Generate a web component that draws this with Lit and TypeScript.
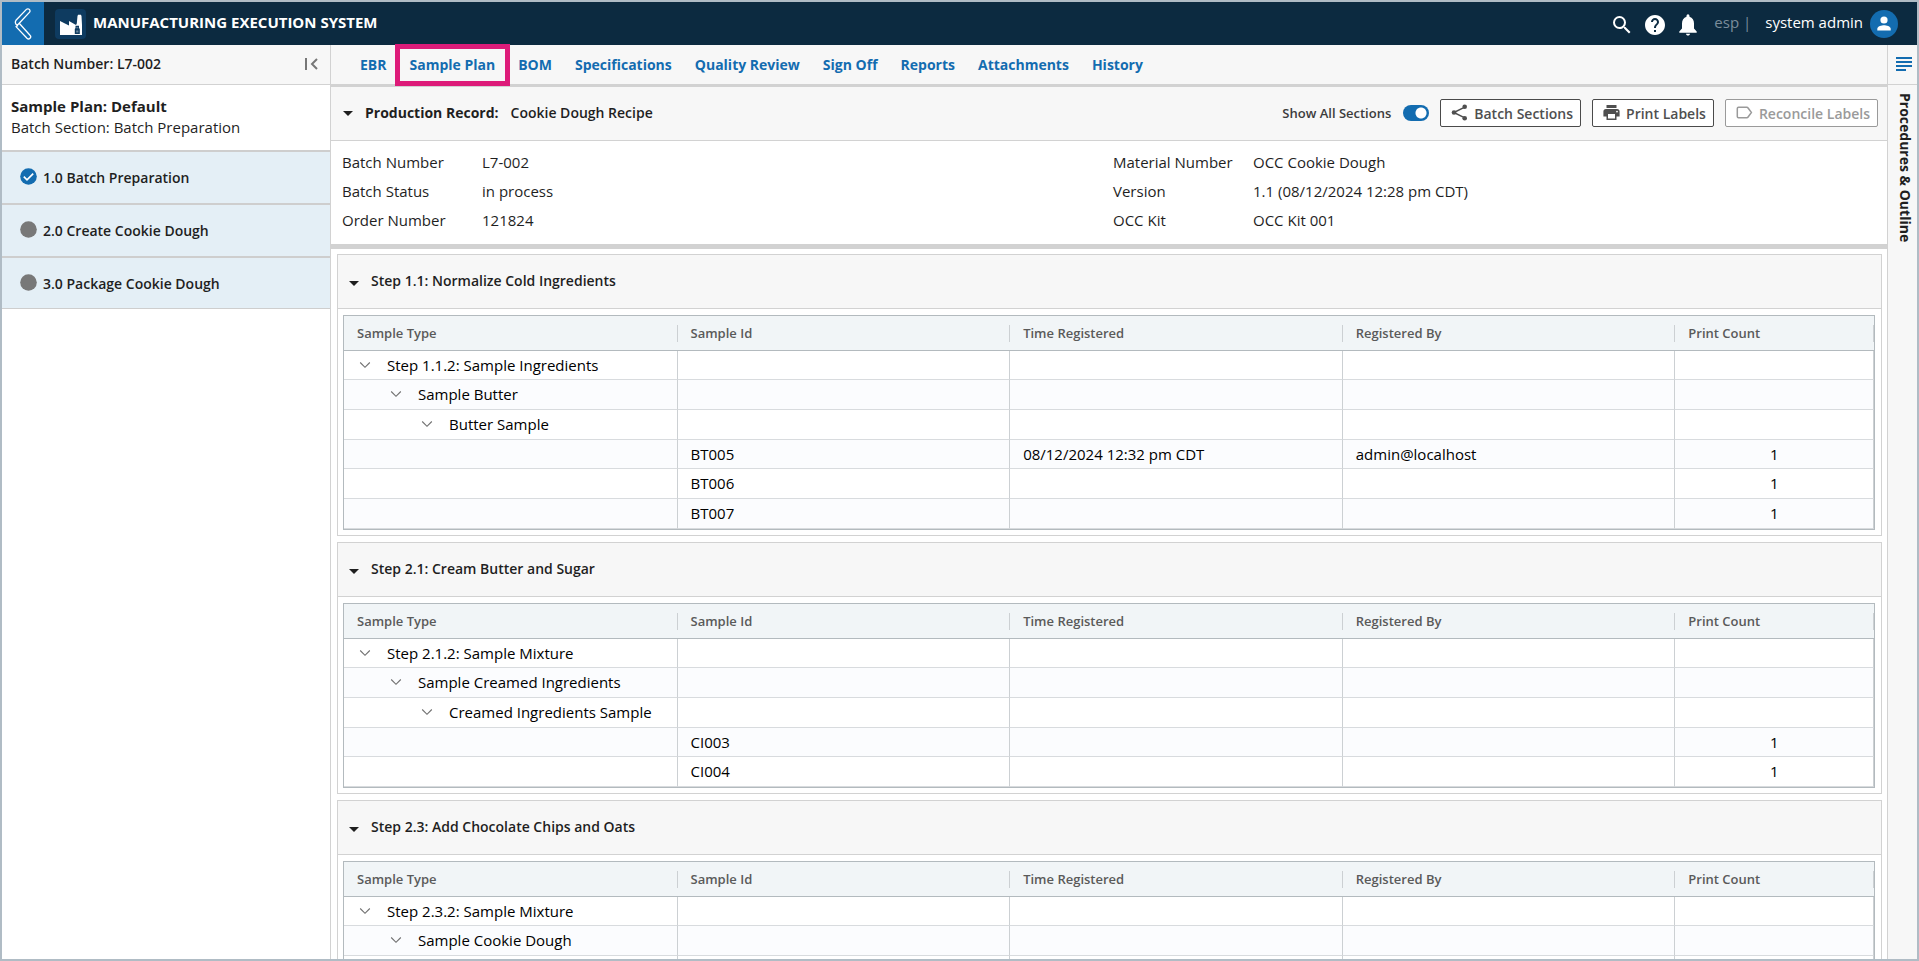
import { LitElement, html, css, svg, nothing } from "lit";
import { customElement, property, state } from "lit/decorators.js";
import { classMap } from "lit/directives/class-map.js";

interface SampleRow {
  level?: number;
  label?: string;
  id?: string;
  time?: string;
  by?: string;
  count?: number;
}

interface Step {
  title: string;
  rows: SampleRow[];
}

const TABS = [
  "EBR",
  "Sample Plan",
  "BOM",
  "Specifications",
  "Quality Review",
  "Sign Off",
  "Reports",
  "Attachments",
  "History",
];

const SECTIONS = [
  { name: "1.0 Batch Preparation", done: true },
  { name: "2.0 Create Cookie Dough", done: false },
  { name: "3.0 Package Cookie Dough", done: false },
];

const DETAILS: [string, string][][] = [
  [
    ["Batch Number", "L7-002"],
    ["Batch Status", "in process"],
    ["Order Number", "121824"],
  ],
  [
    ["Material Number", "OCC Cookie Dough"],
    ["Version", "1.1 (08/12/2024 12:28 pm CDT)"],
    ["OCC Kit", "OCC Kit 001"],
  ],
];

const COLUMNS = ["Sample Type", "Sample Id", "Time Registered", "Registered By", "Print Count"];

const STEPS: Step[] = [
  {
    title: "Step 1.1: Normalize Cold Ingredients",
    rows: [
      { level: 0, label: "Step 1.1.2: Sample Ingredients" },
      { level: 1, label: "Sample Butter" },
      { level: 2, label: "Butter Sample" },
      { id: "BT005", time: "08/12/2024 12:32 pm CDT", by: "admin@localhost", count: 1 },
      { id: "BT006", count: 1 },
      { id: "BT007", count: 1 },
    ],
  },
  {
    title: "Step 2.1: Cream Butter and Sugar",
    rows: [
      { level: 0, label: "Step 2.1.2: Sample Mixture" },
      { level: 1, label: "Sample Creamed Ingredients" },
      { level: 2, label: "Creamed Ingredients Sample" },
      { id: "CI003", count: 1 },
      { id: "CI004", count: 1 },
    ],
  },
  {
    title: "Step 2.3: Add Chocolate Chips and Oats",
    rows: [
      { level: 0, label: "Step 2.3.2: Sample Mixture" },
      { level: 1, label: "Sample Cookie Dough" },
      {},
    ],
  },
];

const caret = svg`<svg width="10" height="5" viewBox="0 0 10 5" aria-hidden="true"><path d="M0 0h10L5 5z" fill="#1f1f1f"/></svg>`;

const buttonReset = css`
  * {
    box-sizing: border-box;
  }
  button {
    font: inherit;
    color: inherit;
    background: none;
    border: 0;
    padding: 0;
    margin: 0;
    cursor: pointer;
  }
  svg {
    display: block;
    flex: none;
  }
`;

@customElement("app-header")
class AppHeader extends LitElement {
  static styles = [
    buttonReset,
    css`
      :host {
        display: flex;
        align-items: center;
        height: 43px;
        flex: none;
        background: #0c2a40;
        color: #fff;
      }
      .back {
        width: 42px;
        height: 43px;
        background: #136cb0;
        display: grid;
        place-items: center;
      }
      .logo {
        width: 31px;
        height: 30px;
        margin: 0 7px 0 11px;
        border-radius: 4px;
        background: #0e3b60;
        display: grid;
        place-items: center;
      }
      .title {
        margin: 0;
        padding-bottom: 3px;
        font-size: 15px;
        line-height: 22px;
        font-weight: 700;
      }
      .tools {
        margin-left: auto;
        display: flex;
        align-items: center;
        padding-right: 19px;
      }
      .icons {
        display: flex;
        gap: 9px;
        padding-top: 3px;
      }
      .site {
        margin-left: 14px;
        padding-bottom: 3px;
        color: #7b8d9b;
        font-size: 15px;
        white-space: pre;
      }
      .user {
        display: flex;
        align-items: center;
        gap: 7px;
        margin-left: 14px;
        font-size: 15px;
      }
      .user span {
        padding-bottom: 3px;
      }
    `,
  ];

  render() {
    return html`
      <button class="back" aria-label="Back">
        <svg width="18" height="32" viewBox="0 0 18 32" fill="none" stroke="#fff" stroke-width="1.3" stroke-linejoin="round">
          <path d="M12.4 1.4a2.1 2.1 0 0 1 3 3L5.2 15.3 16 27.2a2.1 2.1 0 0 1-3 3L2 18.600 5.200 15.300M12.4 1.400 2 12.300a3.600 3.600 0 0 0 .2 4.200l1.700 1.900" />
        </svg>
      </button>
      <div class="logo">
        <svg width="24" height="24" viewBox="0 0 24 24">
          <path fill="#fff" d="M1 23V9l9 4.500V9l7 4 .8-1.500L18.500 4l.6-1.200h2.800l.6 1.200.5 9v10z" />
          <path fill="#0e3b60" d="M16.500 13.800h3.500v2.200l.8 1v5h-5v-5l.7-1z" />
          <path fill="#fff" d="M17.300 15.200h2v1h-2zM17.200 18.500h2.200v2h-2.200z" opacity=".4" />
        </svg>
      </div>
      <h1 class="title">MANUFACTURING EXECUTION SYSTEM</h1>
      <div class="tools">
        <div class="icons">
          <button aria-label="Search">
            <svg width="24" height="24" viewBox="0 0 24 24" fill="#fff"><path d="M15.500 14h-.79l-.28-.27A6.470 6.470 0 0 0 16 9.500 6.500 6.500 0 1 0 9.500 16c1.610 0 3.090-.59 4.230-1.570l.27.28v.79l5 4.990L20.490 19zm-6 0C7.010 14 5 11.990 5 9.500S7.010 5 9.500 5 14 7.010 14 9.500 11.990 14 9.500 14" /></svg>
          </button>
          <button aria-label="Help">
            <svg width="24" height="24" viewBox="0 0 24 24" fill="#fff"><path d="M12 2C6.480 2 2 6.480 2 12s4.480 10 10 10 10-4.480 10-10S17.520 2 12 2m1 17h-2v-2h2zm2.070-7.750-.9.92C13.450 12.900 13 13.500 13 15h-2v-.5c0-1.100.45-2.100 1.170-2.830l1.240-1.260c.37-.36.59-.86.59-1.410 0-1.100-.9-2-2-2s-2 .9-2 2H8c0-2.210 1.790-4 4-4s4 1.790 4 4c0 .88-.36 1.680-.93 2.250" /></svg>
          </button>
          <button aria-label="Notifications">
            <svg width="24" height="24" viewBox="0 0 24 24" fill="#fff"><path d="M12 22.500c1 0 2-.8 2-1.800h-4c0 1 1 1.800 2 1.800m6-7v-5c0-3.370-1.500-6-4.500-6.800V3c0-.83-.67-1.800-1.500-1.800s-1.500.97-1.500 1.800v.7C7.600 4.500 6 7.120 6 10.500v5l-2.700 3v1.200h17.400v-1.200z" /></svg>
          </button>
        </div>
        <span class="site">esp |</span>
        <button class="user">
          <span>system admin</span>
          <svg width="28" height="28" viewBox="0 0 28 28"><circle cx="14" cy="14" r="14" fill="#136cb0" /><circle cx="14" cy="10" r="3.600" fill="#fff" /><path fill="#fff" d="M7.300 20.500v-1.700c0-2.500 4.400-3.600 6.700-3.600s6.700 1.100 6.700 3.600v1.700z" /></svg>
        </button>
      </div>
    `;
  }
}

@customElement("batch-sidebar")
class BatchSidebar extends LitElement {
  static styles = [
    buttonReset,
    css`
      :host {
        display: block;
        width: 329px;
        flex: none;
        border-right: 1px solid #d2d2d2;
        background: #fff;
      }
      .top {
        display: flex;
        align-items: center;
        justify-content: space-between;
        height: 40px;
        padding: 0 12px 2px 9px;
        background: #f7f7f7;
        border-bottom: 1px solid #d2d2d2;
        font-size: 14px;
        font-weight: 600;
      }
      .plan {
        padding: 11px 9px 12px;
        border-bottom: 2px solid #cecece;
        font-size: 15px;
        line-height: 21px;
      }
      .plan h2 {
        margin: 0;
        font-size: 15px;
        font-weight: 700;
      }
      .plan p {
        margin: 0;
      }
      .sections {
        list-style: none;
        margin: 0;
        padding: 0;
      }
      .section {
        display: flex;
        align-items: center;
        gap: 6px;
        width: 100%;
        height: 53px;
        padding: 0 18px;
        background: #e4eff6;
        border-bottom: 2px solid #cecece;
        font-size: 14px;
        font-weight: 600;
        text-align: left;
      }
      .section svg {
        margin-bottom: 2px;
      }
      .sections li:last-child .section {
        height: 51px;
        border-bottom-width: 1px;
      }
    `,
  ];

  render() {
    return html`
      <div class="top">
        <span>Batch Number: L7-002</span>
        <button aria-label="Collapse panel">
          <svg width="13" height="12" viewBox="0 0 13 12" fill="none" stroke="#777" stroke-width="2"><path d="M1 0v12M12 1 7 6l5 5" /></svg>
        </button>
      </div>
      <div class="plan">
        <h2>Sample Plan: Default</h2>
        <p>Batch Section: Batch Preparation</p>
      </div>
      <ul class="sections">
        ${SECTIONS.map(
          (s) => html`<li>
            <button class="section">
              <svg width="17" height="17" viewBox="0 0 17 17">
                <circle cx="8.500" cy="8.500" r="8.300" fill=${s.done ? "#136cb0" : "#787878"} />
                ${s.done ? svg`<path d="M3.800 8.600l3.200 3.200 6.200-6.200" fill="none" stroke="#fff" stroke-width="1.700"/>` : nothing}
              </svg>
              ${s.name}
            </button>
          </li>`,
        )}
      </ul>
    `;
  }
}

@customElement("step-panel")
class StepPanel extends LitElement {
  static styles = [
    buttonReset,
    css`
      :host {
        display: block;
        border: 1px solid #d2d2d2;
        background: #fff;
      }
      .title {
        margin: 0;
        padding-bottom: 2px;
        font-size: 14px;
        font-weight: 600;
        line-height: 51px;
        background: #f7f7f7;
        border-bottom: 1px solid #d2d2d2;
      }
      .toggle {
        display: flex;
        align-items: center;
        gap: 12px;
        width: 100%;
        padding: 0 11px;
      }
      .toggle svg {
        margin-top: 6px;
      }
      .body {
        padding: 6px 6px 5px 5px;
      }
      table {
        width: 100%;
        table-layout: fixed;
        border-spacing: 0;
        border: 1px solid #b3babe;
        font-size: 15px;
        line-height: 20px;
        color: #000;
      }
      th,
      td {
        padding: 0 13px;
        text-align: left;
        font-weight: 400;
        white-space: nowrap;
      }
      th {
        height: 35px;
        padding-right: 0;
        background: #f1f5f7;
        border-bottom: 1px solid #b3babe;
        color: #5a5a5a;
        font-size: 13px;
        font-weight: 600;
      }
      .name {
        display: block;
        line-height: 17px;
        border-right: 1px solid #ccd0d3;
      }
      .type {
        width: 21.8%;
      }
      .data {
        width: 21.74%;
      }
      td {
        height: 30px;
        padding-bottom: 1px;
        border-bottom: 1px solid #d8dbde;
        border-right: 1px solid #ccd0d3;
      }
      tr:nth-child(3n + 1) td {
        height: 29px;
      }
      tr:nth-child(even) td {
        background: #fbfcfe;
      }
      .count {
        text-align: center;
      }
      .node {
        display: flex;
        align-items: center;
        gap: 16px;
        padding-left: 2px;
      }
      .level1 {
        padding-left: 33px;
      }
      .level2 {
        padding-left: 64px;
      }
    `,
  ];

  @property({ attribute: false }) step!: Step;
  @state() private open = true;

  private node(row: SampleRow) {
    if (row.label === undefined) return nothing;
    return html`<div class=${classMap({ node: true, level1: row.level === 1, level2: row.level === 2 })}>
      <button aria-label="Collapse ${row.label}">
        <svg width="12" height="8" viewBox="0 0 12 8" fill="none" stroke="#707070" stroke-width="1.100"><path d="M1.200 1.500 6 6.300 10.800 1.500" /></svg>
      </button>
      <span>${row.label}</span>
    </div>`;
  }

  render() {
    return html`
      <h3 class="title">
        <button class="toggle" aria-expanded=${this.open} @click=${() => (this.open = !this.open)}>${caret} ${this.step.title}</button>
      </h3>
      ${this.open
        ? html`<div class="body">
            <table>
              <thead>
                <tr>
                  ${COLUMNS.map(
                    (c, i) =>
                      html`<th scope="col" class=${classMap({ type: i === 0, data: i > 0 && i < 4 })}><span class="name">${c}</span></th>`,
                  )}
                </tr>
              </thead>
              <tbody>
                ${this.step.rows.map(
                  (r) => html`<tr>
                    <td>${this.node(r)}</td>
                    <td>${r.id}</td>
                    <td>${r.time}</td>
                    <td>${r.by}</td>
                    <td class="count">${r.count}</td>
                  </tr>`,
                )}
              </tbody>
            </table>
          </div>`
        : nothing}
    `;
  }
}

@customElement("app-root")
class AppRoot extends LitElement {
  static styles = [
    buttonReset,
    css`
      :host {
        display: flex;
        flex-direction: column;
        box-sizing: border-box;
        height: 100vh;
        overflow: hidden;
        border: 2px solid #b0bcc5;
        background: #fff;
        color: #1f1f1f;
        font-family: "Open Sans", "Noto Sans", sans-serif;
        font-size: 15px;
      }
      .columns {
        display: flex;
        flex: 1;
        min-height: 0;
      }
      main {
        flex: 1;
        min-width: 0;
        display: flex;
        flex-direction: column;
      }
      .tabs {
        display: flex;
        align-items: center;
        gap: 23px;
        height: 42px;
        flex: none;
        padding: 0 29px;
        background: #f7f7f7;
        border-bottom: 3px solid #d2d2d2;
      }
      .tab {
        position: relative;
        color: #136cb0;
        font-size: 14px;
        font-weight: 700;
        line-height: 20px;
        text-decoration: none;
        white-space: nowrap;
      }
      .current::after {
        content: "";
        position: absolute;
        inset: -11px -15px;
        border: 5px solid #dd1b79;
      }
      .record {
        display: flex;
        align-items: center;
        height: 54px;
        flex: none;
        padding: 0 9px 1px 12px;
        background: #f7f7f7;
        border-bottom: 1px solid #d2d2d2;
      }
      .record h2 {
        margin: 0 auto 0 0;
        padding-bottom: 1px;
        font-size: 14px;
        font-weight: 600;
      }
      .heading {
        display: flex;
        align-items: center;
        gap: 12px;
      }
      .heading svg {
        margin-top: 2px;
      }
      .heading strong {
        font-weight: 700;
      }
      .actions {
        display: flex;
        align-items: center;
        gap: 11px;
      }
      .show {
        display: flex;
        align-items: center;
        gap: 12px;
        font-size: 13px;
        font-weight: 600;
        color: #3c3c3c;
      }
      .switch {
        appearance: none;
        margin: 0;
        width: 26px;
        height: 16px;
        border-radius: 8px;
        background: radial-gradient(circle at 8px 8px, #fff 5px, transparent 6px) #8a8a8a;
      }
      .switch:checked {
        background: radial-gradient(circle at 18px 8px, #fff 5px, transparent 6px) #136cb0;
      }
      .action {
        display: flex;
        align-items: center;
        gap: 6px;
        height: 28px;
        padding: 0 7px 0 10px;
        border: 1px solid #4a4a4a;
        border-radius: 2px;
        background: #fff;
        color: #4f4f4f;
        font-size: 14px;
        font-weight: 600;
        white-space: nowrap;
      }
      .action svg {
        margin-bottom: 2px;
      }
      .action:disabled {
        color: #9a9a9a;
        border-color: #9a9a9a;
      }
      .details {
        display: grid;
        grid-template-columns: 1fr 1fr;
        flex: none;
        padding: 7px 3px 9px 11px;
        border-bottom: 5px solid #d2d2d2;
      }
      dl {
        margin: 0;
      }
      .pair {
        display: grid;
        grid-template-columns: 140px 1fr;
        line-height: 29px;
      }
      dd {
        margin: 0;
      }
      .steps {
        flex: 1;
        min-height: 0;
        overflow: auto;
        scrollbar-width: none;
        padding: 5px 5px 5px 6px;
        display: flex;
        flex-direction: column;
        gap: 6px;
      }
      step-panel {
        flex: none;
      }
      .rail {
        width: 30px;
        flex: none;
        border-left: 1px solid #d2d2d2;
        background: #f7f7f7;
      }
      .outline {
        display: grid;
        place-items: center;
        width: 100%;
        height: 40px;
        padding: 0 0 2px 3px;
        border-bottom: 1px solid #d2d2d2;
      }
      .vertical {
        writing-mode: vertical-rl;
        margin: 8px 0 0 7px;
        font-size: 14px;
        line-height: 20px;
        font-weight: 700;
      }
    `,
  ];

  render() {
    return html`
      <app-header></app-header>
      <div class="columns">
        <batch-sidebar></batch-sidebar>
        <main>
          <nav class="tabs">
            ${TABS.map(
              (t) => html`<a href="#" class=${classMap({ tab: true, current: t === "Sample Plan" })}>${t}</a>`,
            )}
          </nav>
          <div class="record">
            <h2>
              <button class="heading">${caret}<strong>Production Record:</strong><span>Cookie Dough Recipe</span></button>
            </h2>
            <div class="actions">
              <label class="show">Show All Sections <input class="switch" type="checkbox" checked /></label>
              <button class="action">
                <svg width="17" height="17" viewBox="0 0 17 17" fill="#4f4f4f"><path d="M14.300 2.800 2.800 8.500l11.500 5.700" fill="none" stroke="#4f4f4f" stroke-width="1.500" /><circle cx="13.700" cy="2.800" r="2.300" /><circle cx="3" cy="8.500" r="2.300" /><circle cx="13.700" cy="14.200" r="2.300" /></svg>
                Batch Sections
              </button>
              <button class="action">
                <svg width="17" height="17" viewBox="0 0 17 17"><path fill="#4f4f4f" d="M3.500 1h10v3h-10zM3 5h11a2.600 2.600 0 0 1 2.600 2.600v5H13.500V16h-10v-3.400H.4v-5A2.600 2.600 0 0 1 3 5m2 6v3.400h7V10H5zm9-4.300a.9.900 0 1 0 0 1.800.9.900 0 0 0 0-1.800" /></svg>
                Print Labels
              </button>
              <button class="action" disabled>
                <svg width="17" height="17" viewBox="0 0 17 17" fill="none" stroke="#9a9a9a" stroke-width="1.500"><path d="M2.500 3.300h8.300c.6 0 1 .2 1.300.7l3.300 4.500-3.300 4.500c-.3.500-.7.700-1.300.7H2.500c-.7 0-1.200-.5-1.200-1.200v-8c0-.7.500-1.200 1.200-1.200z" /></svg>
                Reconcile Labels
              </button>
            </div>
          </div>
          <div class="details">
            ${DETAILS.map(
              (col) => html`<dl>
                ${col.map(([k, v]) => html`<div class="pair"><dt>${k}</dt><dd>${v}</dd></div>`)}
              </dl>`,
            )}
          </div>
          <div class="steps">${STEPS.map((s) => html`<step-panel .step=${s}></step-panel>`)}</div>
        </main>
        <aside class="rail">
          <button class="outline" aria-label="Open outline">
            <svg width="16" height="14" viewBox="0 0 16 14" stroke="#136cb0" stroke-width="2"><path d="M0 1h16M0 5h16M0 9h16M0 13h10" /></svg>
          </button>
          <div class="vertical">Procedures &amp; Outline</div>
        </aside>
      </div>
    `;
  }
}
